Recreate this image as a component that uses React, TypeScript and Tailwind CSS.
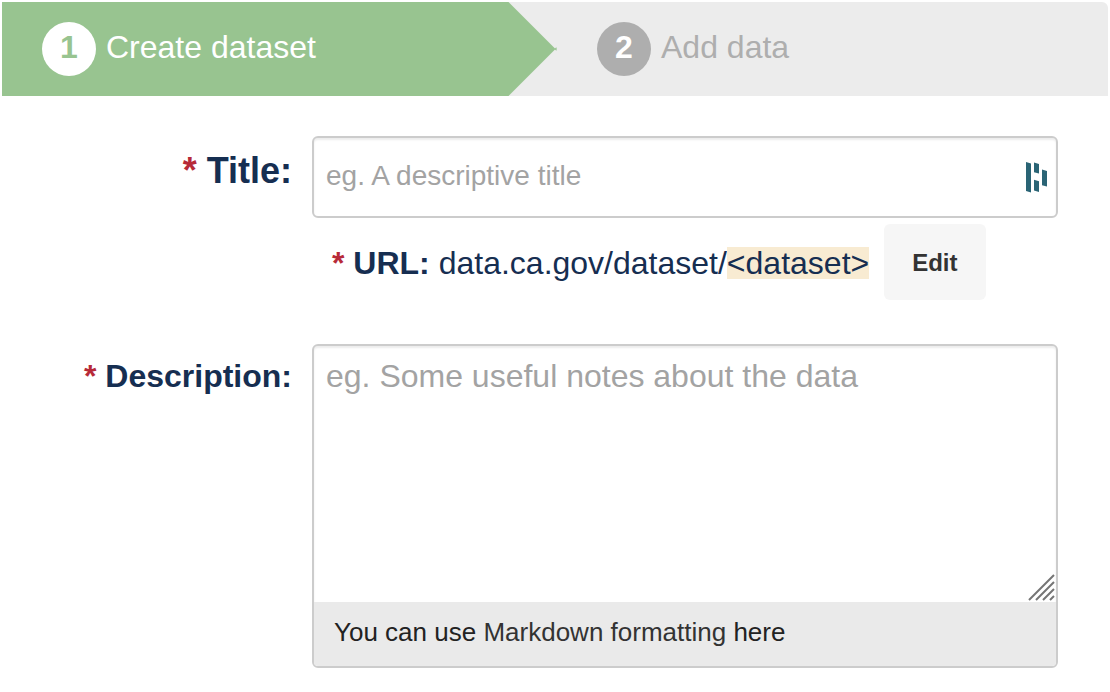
import React from "react";

function Required() {
  return <span className="text-[#b72a38]" aria-hidden="true">* </span>;
}

function StepNumber({ value, active }: { value: number; active?: boolean }) {
  return (
    <span
      className={
        "flex size-[54px] shrink-0 items-center justify-center rounded-full pb-1 font-bold " +
        (active ? "bg-white text-[#98c490]" : "bg-[#aeaeae] text-white")
      }
    >
      {value}
    </span>
  );
}

function Steps() {
  return (
    <ol className="grid grid-cols-2 overflow-hidden rounded-tr-md bg-[#ececec] text-[32px] leading-[50px]">
      <li className="flex" aria-current="step">
        <div className="flex flex-1 items-center gap-[10px] bg-[#98c490] py-5 pl-10 text-white">
          <StepNumber value={1} active />
          <span className="pb-1">Create dataset</span>
        </div>
        <svg className="h-full w-12 shrink-0 overflow-visible" viewBox="0 0 48 94" fill="#98c490" aria-hidden="true">
          <path d="M0 0H1.5L48 46.5L49 45.5H49.6V48.5H49L48 47.5L1.5 94H0Z" />
        </svg>
      </li>
      <li className="flex items-center gap-[10px] py-5 pl-[42px] text-[#aeaeae]">
        <StepNumber value={2} />
        <span className="pb-1">Add data</span>
      </li>
    </ol>
  );
}

function ManagerIcon() {
  return (
    <svg className="h-8 w-6 shrink-0" viewBox="0 0 24 32" fill="#2a6475" aria-hidden="true">
      <path d="M2 1L7 2.4V31.4L2 30Z M10 1.6L15 3V12.6L10 11.2Z M10 18.8L15 20.2V31L10 29.6Z M18 8.6L23 10V25.6L18 24.2Z" />
    </svg>
  );
}

const fieldBox =
  "rounded-md border-2 border-[#cccccc] bg-white shadow-[inset_0_2px_2px_rgba(0,0,0,0.075)]";

export default function App() {
  return (
    <main className="min-h-screen bg-white p-[2px] font-['Liberation_Sans',Arial,sans-serif] text-[#162e51]">
      <Steps />
      <form className="mt-10 grid grid-cols-[290px_1fr] gap-x-5 pr-[50px] text-[32px]">
        <label htmlFor="title" className="pt-3 text-right text-[36px] leading-[46px] font-bold">
          <Required />
          Title:
        </label>
        <div>
          <div className={"flex h-[82px] items-center pr-2 pl-3 " + fieldBox}>
            <input
              id="title"
              type="text"
              required
              placeholder="eg. A descriptive title"
              className="h-full min-w-0 flex-1 bg-transparent pb-[2px] text-[28px] outline-none placeholder:text-[#a3a3a3]"
            />
            <ManagerIcon />
          </div>
          <div className="mt-[6px] flex items-center pl-5">
            <p className="pt-[2px] leading-10">
              <strong>
                <Required />
                URL:
              </strong>{" "}
              data.ca.gov/dataset/
              <span className="inline-block bg-[#f8ebd2] leading-8">&lt;dataset&gt;</span>
            </p>
            <button
              type="button"
              className="ml-[15px] h-[76px] rounded-md bg-[#f6f6f6] px-7 pt-[2px] text-[24px] font-bold text-[#333333]"
            >
              Edit
            </button>
          </div>
        </div>

        <label htmlFor="description" className="mt-11 pt-3 text-right leading-10 font-bold">
          <Required />
          Description:
        </label>
        <div className={"mt-11 overflow-hidden " + fieldBox}>
          <div className="relative">
            <textarea
              id="description"
              required
              placeholder="eg. Some useful notes about the data"
              className="block h-64 w-full resize-none bg-transparent px-3 pt-[10px] leading-10 outline-none placeholder:text-[#a3a3a3]"
            />
            <svg
              className="pointer-events-none absolute right-0 bottom-0 size-7"
              viewBox="0 0 28 28"
              stroke="#757575"
              strokeWidth="2"
              aria-hidden="true"
            >
              <path d="M1 26L26 1M8 26L26 8M15 26L26 15M22 26L26 22" />
            </svg>
          </div>
          <p className="bg-[#eaeaea] px-5 pt-3 pb-4 text-[26px] leading-9 text-[#222222]">
            You can use{" "}
            <a href="#markdown" className="text-[#333333]">
              Markdown formatting
            </a>{" "}
            here
          </p>
        </div>
      </form>
    </main>
  );
}
